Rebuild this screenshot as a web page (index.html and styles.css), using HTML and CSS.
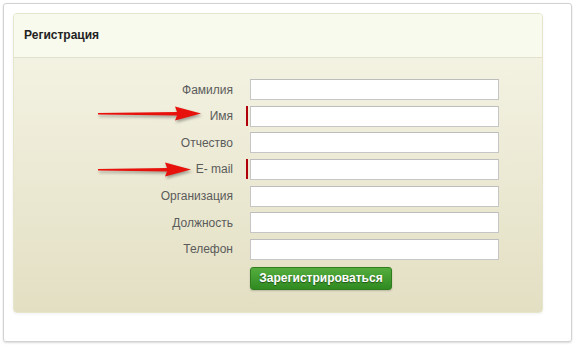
FILE: index.html
```html
<!DOCTYPE html>
<html>
<head>
    <title>Регистрация</title>
    <link rel="stylesheet" href="styles.css">
</head>
<body>
    <div class="frame">
        <div class="panel">
            <div class="panel-head">Регистрация</div>
            <form class="panel-body">
                <div class="row">
                    <label>Фамилия</label>
                    <span class="mark"></span>
                    <input type="text">
                </div>
                <div class="row required">
                    <label>Имя</label>
                    <span class="mark"></span>
                    <input type="text">
                </div>
                <div class="row">
                    <label>Отчество</label>
                    <span class="mark"></span>
                    <input type="text">
                </div>
                <div class="row required">
                    <label>E- mail</label>
                    <span class="mark"></span>
                    <input type="text">
                </div>
                <div class="row">
                    <label>Организация</label>
                    <span class="mark"></span>
                    <input type="text">
                </div>
                <div class="row">
                    <label>Должность</label>
                    <span class="mark"></span>
                    <input type="text">
                </div>
                <div class="row">
                    <label>Телефон</label>
                    <span class="mark"></span>
                    <input type="text">
                </div>
                <div class="actions">
                    <button type="button">Зарегистрироваться</button>
                </div>
            </form>
        </div>

        <!-- annotation arrows drawn over the form -->
        <svg class="arrow arrow-name" width="110" height="20" viewBox="0 0 110 20">
            <path d="M1 9 L80 8 L78 2.5 L104 9.5 L78 16.5 L80 11.6 L1 10.6 Z" fill="#e8120c"/>
        </svg>
        <svg class="arrow arrow-mail" width="100" height="20" viewBox="0 0 100 20">
            <path d="M1 9 L70 8 L68 2.5 L94 9.5 L68 16.5 L70 11.6 L1 10.6 Z" fill="#e8120c"/>
        </svg>
    </div>
</body>
</html>
```

FILE: styles.css
```css
body {
    margin: 0;
    background: #fff;
    font-family: Arial, "Liberation Sans", sans-serif;
}
.frame {
    position: relative;
    margin: 3px;
    border: 1px solid #d2d2d2;
    border-radius: 3px;
    box-shadow: 0 1px 2px rgba(0, 0, 0, 0.15);
    padding: 9px;
    width: 549px;
    height: 319px;
}
.panel {
    width: 528px;
    height: 298px;
    border: 1px solid #e6e6cc;
    border-radius: 4px;
    background: linear-gradient(#f6f6e8, #e3dfc3);
    box-shadow: 0 1px 3px rgba(0, 0, 0, 0.06);
    overflow: hidden;
}
.panel-head {
    height: 43px;
    line-height: 43px;
    padding-left: 10px;
    background: #f9faee;
    border-bottom: 1px solid #e2e2cb;
    font-size: 12px;
    font-weight: bold;
    color: #222;
}
.panel-body {
    padding-top: 21px;
    display: flex;
    flex-direction: column;
    gap: 5.67px;
    margin: 0;
}
.row {
    display: flex;
    align-items: center;
}
.row label {
    width: 219px;
    text-align: right;
    font-size: 12px;
    color: #5b5b5b;
}
.mark {
    width: 17px;
    height: 21px;
    display: flex;
    justify-content: flex-end;
    padding-right: 2px;
    box-sizing: border-box;
}
.required .mark::after {
    content: "";
    width: 2px;
    height: 20px;
    background: #b0000a;
}
.row input {
    width: 249px;
    height: 21px;
    box-sizing: border-box;
    border: 1px solid #c6c6c6;
    border-top-color: #bdbdbd;
    background: #fff;
    margin: 0;
    padding: 2px 4px;
    font-size: 12px;
}
.actions {
    padding-left: 236px;
    padding-top: 1px;
}
.actions button {
    width: 142px;
    height: 23px;
    border: 1px solid #2f7d1f;
    border-radius: 3px;
    background: linear-gradient(#55ad3e, #2f8a20);
    color: #fff;
    font-family: Arial, "Liberation Sans", sans-serif;
    font-size: 12px;
    font-weight: bold;
    text-shadow: 0 1px 1px rgba(0, 0, 0, 0.45);
    box-shadow: 0 1px 2px rgba(0, 0, 0, 0.2);
    padding: 0;
    cursor: pointer;
}
.arrow {
    position: absolute;
    filter: drop-shadow(1px 2px 1.5px rgba(0, 0, 0, 0.35));
}
.arrow-name {
    left: 93px;
    top: 100px;
}
.arrow-mail {
    left: 93px;
    top: 156px;
}
```
